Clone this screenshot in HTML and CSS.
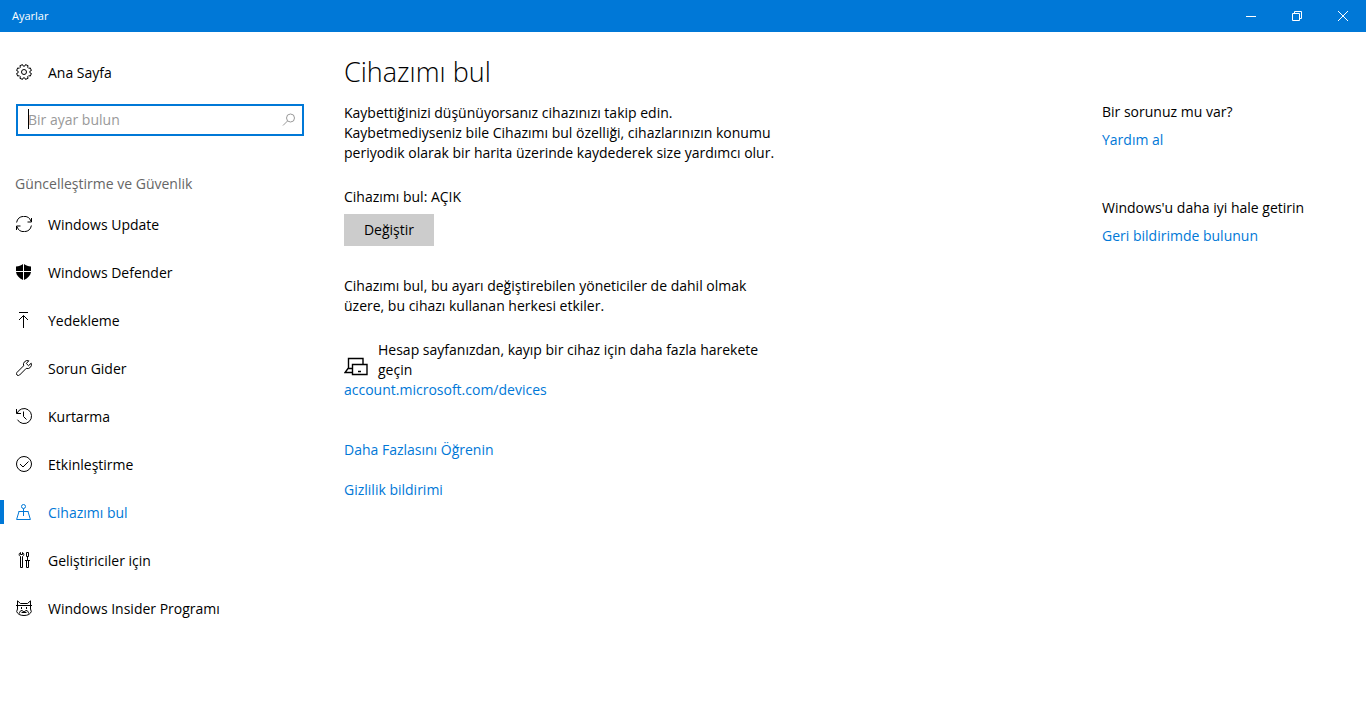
FILE: index.html
```html
<!DOCTYPE html>
<html lang="tr">
<head>
    <meta charset="UTF-8">
    <meta name="viewport" content="width=device-width, initial-scale=1.0">
    <title>Ayarlar</title>
    <link rel="stylesheet" href="styles.css">
</head>
<body>
    <header class="titlebar">
        <span class="title">Ayarlar</span>
        <div class="window-buttons">
            <button type="button" aria-label="Simge durumuna küçült">
                <svg width="12" height="12" viewBox="0 0 12 12"><path d="M1 6.5h10"/></svg>
            </button>
            <button type="button" aria-label="Önceki boyut">
                <svg width="12" height="12" viewBox="0 0 12 12"><path d="M1.5 3.5h7v7h-7zM3.5 3.5v-2h7v7h-2"/></svg>
            </button>
            <button type="button" aria-label="Kapat">
                <svg width="12" height="12" viewBox="0 0 12 12"><path d="M1 1l10 10M11 1L1 11"/></svg>
            </button>
        </div>
    </header>

    <div class="layout">
        <aside class="sidebar">
            <a href="#" class="nav-item">
                <svg class="icon" viewBox="-8 -8 16 16"><path d="M.8-5.9L1.5-7.4 4.1-6.3 3.6-4.8 4.8-3.6 6.3-4.1 7.4-1.5 5.9-.8V.8L7.4 1.5 6.3 4.1 4.8 3.6 3.6 4.8 4.1 6.3 1.5 7.4.8 5.9H-.8L-1.5 7.4-4.1 6.3-3.6 4.8-4.8 3.6-6.3 4.1-7.4 1.5-5.9.8V-.8L-7.4-1.5-6.3-4.1-4.8-3.6-3.6-4.8-4.1-6.3-1.5-7.4-.8-5.9z"/><circle r="2.5"/></svg>
                <span>Ana Sayfa</span>
            </a>

            <div class="search">
                <input type="text" placeholder="Bir ayar bulun" aria-label="Bir ayar bulun">
                <span class="caret"></span>
                <svg class="search-icon" viewBox="0 0 16 16"><circle cx="9.5" cy="6" r="4"/><path d="M6.5 9L2 13.5"/></svg>
            </div>

            <h2>Güncelleştirme ve Güvenlik</h2>
            <nav>
                <a href="#" class="nav-item">
                    <svg class="icon" viewBox="0 0 16 16"><path d="M.6 6.5a7.5 7.5 0 0 1 14.5-1M15.500 2v4H11.500M15.400 9.500a7.500 7.500 0 0 1-14.500 1M.5 14v-4h4"/></svg>
                    <span>Windows Update</span>
                </a>
                <a href="#" class="nav-item">
                    <svg class="icon solid" viewBox="0 0 16 16"><path d="M7 0v7H0V2.5C3 2.5 5 1.5 7 0zM8 0c2 1.500 4 2.500 7 2.500V7H8zM0 8h7v8C3 14 .5 11.500 0 8zM8 8h7c-.5 3.500-3 6-7 8z"/></svg>
                    <span>Windows Defender</span>
                </a>
                <a href="#" class="nav-item">
                    <svg class="icon" viewBox="0 0 16 16"><path d="M3 .5h9M7.5 16V3.500M3 8l4.500-4.500L12 8"/></svg>
                    <span>Yedekleme</span>
                </a>
                <a href="#" class="nav-item">
                    <svg class="icon" viewBox="0 0 16 16"><path d="M12.800.8a4 4 0 0 0-5.200 5L1 12.400A1.600 1.600 0 0 0 3.600 15l6.600-6.600a4 4 0 0 0 5-5.200L12.500 5.700l-2.200-2.200z"/></svg>
                    <span>Sorun Gider</span>
                </a>
                <a href="#" class="nav-item">
                    <svg class="icon" viewBox="0 0 16 16"><path d="M.5 1v4.500H5M1 5.500A7.500 7.500 0 1 1 1.500 11.700M7.500 3.500v5l3 3"/></svg>
                    <span>Kurtarma</span>
                </a>
                <a href="#" class="nav-item">
                    <svg class="icon" viewBox="0 0 16 16"><circle cx="8" cy="8" r="7.5"/><path d="M4 8l3 3 5.5-5.5"/></svg>
                    <span>Etkinleştirme</span>
                </a>
                <a href="#" class="nav-item active">
                    <svg class="icon" viewBox="0 0 16 16"><circle cx="7.5" cy="2.5" r="2"/><path d="M7.5 4.500V12M2.500 7.500h10M3 7.500L.6 15.500h13.800L12 7.500"/></svg>
                    <span>Cihazımı bul</span>
                </a>
                <a href="#" class="nav-item">
                    <svg class="icon" viewBox="0 0 16 16"><path d="M4.500.5C2.500 1.500 3 4 4.500 4.500v11h2v-11C8 4 8.500 1.500 6.500.5v2h-2zM10.500.5h2v4h-2zM11.500 4.500v4M9 8.500h5M10.500 8.500v7h2v-7"/></svg>
                    <span>Geliştiriciler için</span>
                </a>
                <a href="#" class="nav-item">
                    <svg class="icon" viewBox="0 0 16 16"><path d="M1.500 5V.8L4.500 3.500h7L14.500.8V5M0 5.500h16M1.500 6v3L.7 11.500C1.500 14 4 15.500 8 15.500s6.500-1.500 7.300-4L14.500 9V6M5.500 7v2M10.500 7v2M3.500 13.500c0-2 1-3 2.500-3l2 1.500 2-1.500c1.500 0 2.500 1 2.500 3M5.500 12.500h5"/></svg>
                    <span>Windows Insider Programı</span>
                </a>
            </nav>
        </aside>

        <main class="content">
            <h1>Cihazımı bul</h1>
            <p>Kaybettiğinizi düşünüyorsanız cihazınızı takip edin.<br>Kaybetmediyseniz bile Cihazımı bul özelliği, cihazlarınızın konumu<br>periyodik olarak bir harita üzerinde kaydederek size yardımcı olur.</p>
            <p class="status">Cihazımı bul: AÇIK</p>
            <button type="button" class="change">Değiştir</button>
            <p class="note">Cihazımı bul, bu ayarı değiştirebilen yöneticiler de dahil olmak<br>üzere, bu cihazı kullanan herkesi etkiler.</p>
            <div class="account">
                <svg class="devices" viewBox="0 0 24 24"><path stroke-width="1.4" d="M4.500 12V2.500h14.500V8M8.500 16.500H1l3-4h4.500M8.500 8.500h14.500v10H8.500zM14 15.500h3"/></svg>
                <p>Hesap sayfanızdan, kayıp bir cihaz için daha fazla harekete<br>geçin</p>
            </div>
            <a href="#">account.microsoft.com/devices</a>
            <div class="more">
                <a href="#">Daha Fazlasını Öğrenin</a>
                <a href="#">Gizlilik bildirimi</a>
            </div>
        </main>

        <aside class="help">
            <section>
                <p>Bir sorunuz mu var?</p>
                <a href="#">Yardım al</a>
            </section>
            <section>
                <p>Windows'u daha iyi hale getirin</p>
                <a href="#">Geri bildirimde bulunun</a>
            </section>
        </aside>
    </div>
</body>
</html>
```
FILE: styles.css
```css
* {
    margin: 0;
    padding: 0;
    box-sizing: border-box;
}

body {
    background-color: #fff;
    color: #000;
    font-family: 'Segoe UI', 'Open Sans', sans-serif;
    font-size: 14px;
    line-height: 20px;
}

a {
    color: #0078d7;
    text-decoration: none;
}

button {
    border: none;
    font: inherit;
}

svg {
    fill: none;
    stroke: currentColor;
    stroke-width: 1;
    flex-shrink: 0;
}

.titlebar {
    display: flex;
    justify-content: space-between;
    align-items: center;
    height: 32px;
    padding-left: 12px;
    background-color: #0078d7;
    color: #fff;
}

.title {
    font-size: 11px;
}

.window-buttons {
    display: flex;
}

.window-buttons button {
    display: flex;
    align-items: center;
    justify-content: center;
    width: 46px;
    height: 32px;
    background: none;
    color: #fff;
}

.layout {
    display: flex;
}

.sidebar {
    width: 320px;
    flex-shrink: 0;
    padding-top: 16px;
}

.nav-item {
    display: flex;
    align-items: center;
    gap: 16px;
    height: 48px;
    padding-left: 16px;
    color: #000;
}

.nav-item span {
    padding-top: 2px;
}

.icon {
    width: 16px;
    height: 16px;
}

.solid {
    fill: currentColor;
    stroke: none;
}

.active {
    position: relative;
    color: #0078d7;
}

.active::before {
    content: "";
    position: absolute;
    left: 0;
    top: 12px;
    width: 4px;
    height: 24px;
    background-color: #0078d7;
}

.search {
    position: relative;
    margin: 8px 16px 0;
}

.search input {
    display: block;
    width: 100%;
    height: 32px;
    padding: 0 32px 2px 10px;
    border: 2px solid #0078d7;
    outline: none;
    font: inherit;
}

.search input::placeholder {
    color: #999;
}

.caret {
    position: absolute;
    left: 12px;
    top: 5px;
    width: 1px;
    height: 20px;
    background-color: #000;
}

.search-icon {
    position: absolute;
    right: 7px;
    top: 8px;
    width: 16px;
    height: 16px;
    color: #999;
}

h2 {
    margin: 38px 0 6px 15px;
    font-size: 14px;
    font-weight: 400;
    line-height: 20px;
    color: #666;
}

.content {
    flex: 1;
    padding: 24px;
}

h1 {
    margin-bottom: 15px;
    font-size: 27px;
    font-weight: 300;
    line-height: 32px;
}

.status {
    margin: 24px 0 7px;
}

.change {
    min-width: 90px;
    height: 32px;
    background-color: #ccc;
}

.note {
    margin: 30px 0 24px;
}

.account {
    display: flex;
    align-items: flex-end;
    gap: 10px;
}

.devices {
    width: 24px;
    height: 24px;
}

.more {
    display: flex;
    flex-direction: column;
    align-items: flex-start;
    gap: 20px;
    margin-top: 40px;
}

.help {
    display: flex;
    flex-direction: column;
    gap: 48px;
    width: 264px;
    flex-shrink: 0;
    padding-top: 70px;
}

.help p {
    margin-bottom: 8px;
}
```
